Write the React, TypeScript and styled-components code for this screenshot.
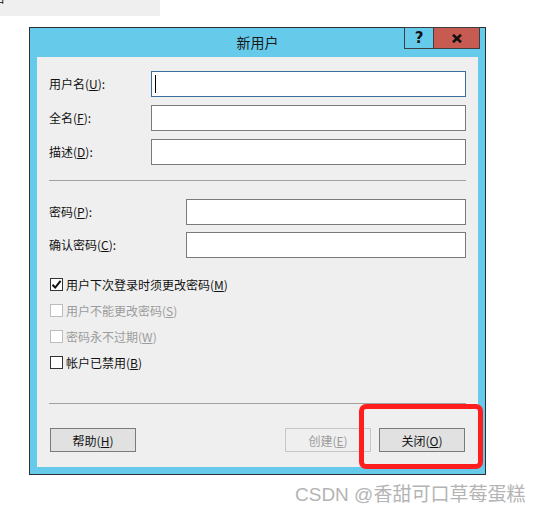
import React from "react";
import styled, { createGlobalStyle } from "styled-components";

const Global = createGlobalStyle`
  html, body { margin: 0; padding: 0; background: #ffffff; }
  body { font-family: "Noto Sans CJK SC", "Noto Sans", sans-serif; }
  * { box-sizing: border-box; }
`;

const Page = styled.div`
  position: relative;
  width: 541px;
  height: 515px;
  background: #ffffff;
  overflow: hidden;
`;

const TopStrip = styled.div`
  width: 160px;
  height: 16px;
  background: #efefef;
  overflow: hidden;
  font-size: 12px;
  line-height: 12px;
  color: #111;
`;

const StripText = styled.span`
  display: block;
  margin: -4px 0 0 -7px;
`;

const Window = styled.div`
  position: relative;
  margin: 11px 0 0 29px;
  width: 457px;
  border: 1px solid #2b2f33;
  background: #66cbea;
  padding: 0 7px 7px 7px;
`;

const TitleBar = styled.div`
  height: 29px;
  display: flex;
  align-items: center;
  justify-content: center;
  font-size: 14px;
  color: #1a1a1a;
  padding-bottom: 2px;
`;

const CaptionButtons = styled.div`
  position: absolute;
  top: -1px;
  right: 5px;
  display: flex;
  border: 1px solid #3a3f44;
`;

const CaptionButton = styled.div<{ $close?: boolean }>`
  width: ${(p) => (p.$close ? "46px" : "28px")};
  height: 20px;
  display: flex;
  align-items: center;
  justify-content: center;
  background: ${(p) => (p.$close ? "#c75a51" : "#66cbea")};
  border-left: ${(p) => (p.$close ? "1px solid #3a3f44" : "none")};
  font-family: "DejaVu Sans", sans-serif;
  font-weight: bold;
  font-size: 15px;
  color: #111;
`;

const Client = styled.div`
  background: #efefef;
  height: 410px;
  padding: 14px 12px 15px 12px;
  display: flex;
  flex-direction: column;
  font-size: 12px;
  color: #111;
`;

const FieldGrid = styled.div<{ $labelWidth: number; $gap: number; $top: number }>`
  display: grid;
  grid-template-columns: ${(p) => p.$labelWidth}px 1fr;
  row-gap: ${(p) => p.$gap}px;
  align-items: center;
  margin-top: ${(p) => p.$top}px;
`;

const Label = styled.div`
  font-size: 12px;
  line-height: 14px;
  white-space: nowrap;
`;

const TextBox = styled.div<{ $focused?: boolean }>`
  height: 26px;
  background: #ffffff;
  border: 1px solid ${(p) => (p.$focused ? "#3b6d9a" : "#7a7a7a")};
  display: flex;
  align-items: center;
  padding-left: 3px;
`;

const Caret = styled.span`
  width: 1px;
  height: 18px;
  background: #000;
`;

const Separator = styled.div<{ $top: number }>`
  height: 1px;
  background: #a0a0a0;
  margin-top: ${(p) => p.$top}px;
`;

const CheckList = styled.div`
  display: flex;
  flex-direction: column;
  gap: 13px;
  margin-top: 20px;
`;

const CheckRow = styled.div<{ $disabled?: boolean }>`
  height: 13px;
  display: flex;
  align-items: center;
  gap: 3px;
  padding-left: 1px;
  color: ${(p) => (p.$disabled ? "#9c9c9c" : "#111")};
  white-space: nowrap;
`;

const Box = styled.span<{ $disabled?: boolean }>`
  width: 13px;
  height: 13px;
  flex: none;
  border: 1px solid ${(p) => (p.$disabled ? "#bdbdbd" : "#333")};
  background: #ffffff;
  display: flex;
  align-items: center;
  justify-content: center;
`;

const ButtonRow = styled.div`
  display: flex;
  align-items: center;
  margin-top: 24px;
  padding: 0 1px;
  gap: 8px;
`;

const Spacer = styled.div`
  flex: 1;
`;

const Button = styled.div<{ $disabled?: boolean }>`
  width: 86px;
  height: 24px;
  display: flex;
  align-items: center;
  justify-content: center;
  font-size: 12px;
  background: ${(p) => (p.$disabled ? "#efefef" : "#e1e1e1")};
  border: 1px solid ${(p) => (p.$disabled ? "#c6c6c6" : "#7a7a7a")};
  color: ${(p) => (p.$disabled ? "#9c9c9c" : "#111")};
`;

const Highlight = styled.div`
  position: absolute;
  left: 359px;
  top: 404px;
  width: 124px;
  height: 65px;
  border: 5px solid #ff1d1d;
  border-radius: 7px;
`;

const Watermark = styled.div`
  position: absolute;
  left: 295px;
  top: 483px;
  font-family: "Liberation Sans", "Noto Sans CJK SC", sans-serif;
  font-size: 19px;
  line-height: 24px;
  color: #b4b4b4;
  white-space: nowrap;
`;

const Check = () => (
  <svg width="11" height="11" viewBox="0 0 11 11">
    <path d="M1.5 5.8 L4.2 8.6 L9.6 1.8" fill="none" stroke="#111" strokeWidth="2" />
  </svg>
);

const CloseGlyph = () => (
  <svg width="10" height="9" viewBox="0 0 10 9">
    <path d="M1 0.8 L9 8.2 M9 0.8 L1 8.2" stroke="#111" strokeWidth="2.6" />
  </svg>
);

const Mn = ({ text, k }: { text: string; k: string }) => (
  <>
    {text}(<u>{k}</u>)
  </>
);

const checks = [
  { text: "用户下次登录时须更改密码", k: "M", checked: true, disabled: false },
  { text: "用户不能更改密码", k: "S", checked: false, disabled: true },
  { text: "密码永不过期", k: "W", checked: false, disabled: true },
  { text: "帐户已禁用", k: "B", checked: false, disabled: false },
];

export default function App() {
  return (
    <Page>
      <Global />
      <TopStrip>
        <StripText>户</StripText>
      </TopStrip>
      <Window>
        <TitleBar>新用户</TitleBar>
        <CaptionButtons>
          <CaptionButton>?</CaptionButton>
          <CaptionButton $close>
            <CloseGlyph />
          </CaptionButton>
        </CaptionButtons>
        <Client>
          <FieldGrid $labelWidth={102} $gap={8} $top={0}>
            <Label>
              <Mn text="用户名" k="U" />:
            </Label>
            <TextBox $focused>
              <Caret />
            </TextBox>
            <Label>
              <Mn text="全名" k="F" />:
            </Label>
            <TextBox />
            <Label>
              <Mn text="描述" k="D" />:
            </Label>
            <TextBox />
          </FieldGrid>
          <Separator $top={15} />
          <FieldGrid $labelWidth={137} $gap={7} $top={18}>
            <Label>
              <Mn text="密码" k="P" />:
            </Label>
            <TextBox />
            <Label>
              <Mn text="确认密码" k="C" />:
            </Label>
            <TextBox />
          </FieldGrid>
          <CheckList>
            {checks.map((c) => (
              <CheckRow key={c.k} $disabled={c.disabled}>
                <Box $disabled={c.disabled}>{c.checked && <Check />}</Box>
                <span>
                  <Mn text={c.text} k={c.k} />
                </span>
              </CheckRow>
            ))}
          </CheckList>
          <Separator $top={34} />
          <ButtonRow>
            <Button>
              <Mn text="帮助" k="H" />
            </Button>
            <Spacer />
            <Button $disabled>
              <Mn text="创建" k="E" />
            </Button>
            <Button>
              <Mn text="关闭" k="O" />
            </Button>
          </ButtonRow>
        </Client>
      </Window>
      <Highlight />
      <Watermark>CSDN @香甜可口草莓蛋糕</Watermark>
    </Page>
  );
}
